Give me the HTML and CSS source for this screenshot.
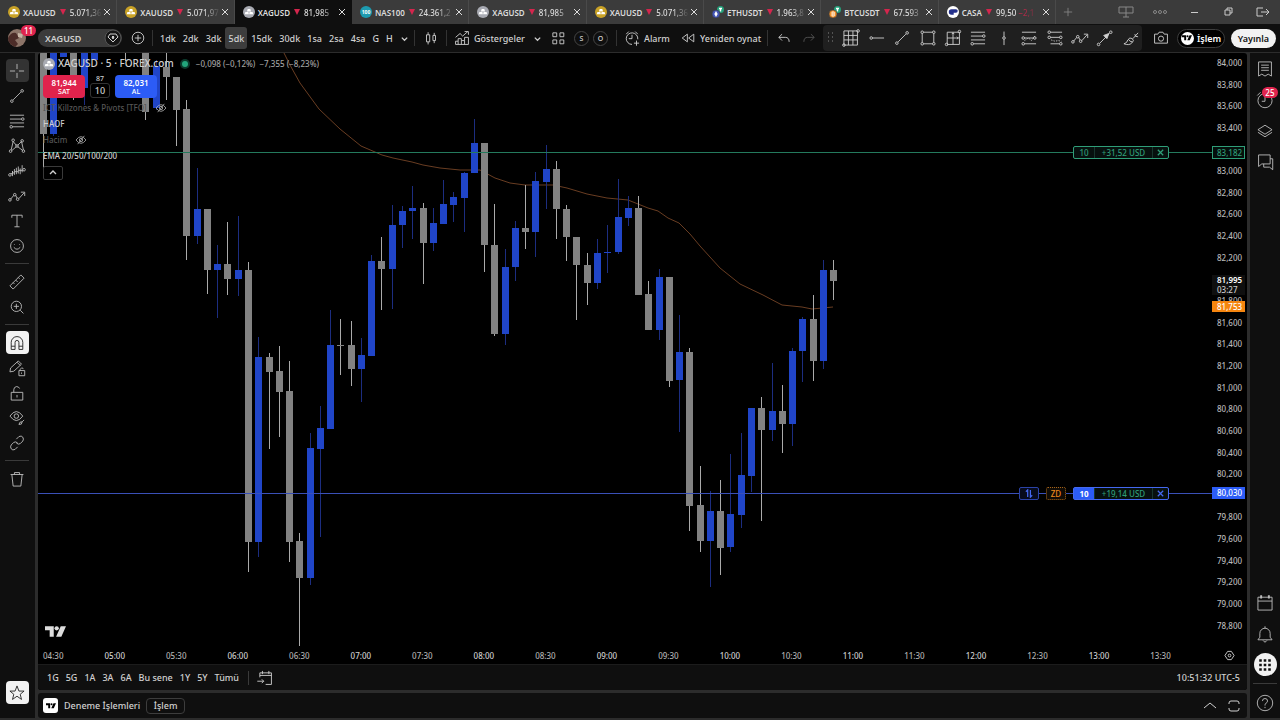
FILE: index.html
```html
<!DOCTYPE html>
<html lang="tr">
<head>
  <meta charset="UTF-8">
  <title>XAGUSD 81,985</title>
  <link rel="stylesheet" href="styles.css">
</head>
<body>

  <!-- Shared icons -->
  <svg class="sprite" xmlns="http://www.w3.org/2000/svg">
    <symbol id="i-x" viewBox="0 0 10 10"><path d="M2 2l6 6M8 2l-6 6"/></symbol>
    <symbol id="i-chev" viewBox="0 0 10 10"><path d="M2 4l3 3 3-3"/></symbol>
    <symbol id="i-up" viewBox="0 0 16 16"><path d="M2 10l6-5 6 5"/></symbol>
    <symbol id="i-gold" viewBox="0 0 12 12"><circle cx="6" cy="6" r="6" fill="#c9a227" stroke="none"/><path d="M4.7 3h2.6l.8 2.5H3.9zM2.4 6h3l.5 2.3H1.7zM6.6 6h3l.7 2.3H6.1z" fill="#fff" stroke="none"/></symbol>
    <symbol id="i-silver" viewBox="0 0 12 12"><circle cx="6" cy="6" r="6" fill="#a9abb3" stroke="none"/><path d="M4.7 3h2.6l.8 2.5H3.9zM2.4 6h3l.5 2.3H1.7zM6.6 6h3l.7 2.3H6.1z" fill="#fff" stroke="none"/></symbol>
    <symbol id="i-tv" viewBox="0 0 36 20"><path d="M0 0h15v18H8V7H0zM27 0h9l-8 18h-9z" fill="currentColor" stroke="none"/><circle cx="20" cy="3.7" r="3.7" fill="currentColor" stroke="none"/></symbol>
    <symbol id="i-trend" viewBox="0 0 28 28"><path d="M8 20L20 8"/><circle cx="6" cy="22" r="2"/><circle cx="22" cy="6" r="2"/></symbol>
    <symbol id="i-fib" viewBox="0 0 28 28"><path d="M3 5h22M3 11h18M3 17h22M7 23h18"/><circle cx="23" cy="11" r="2"/><circle cx="5" cy="23" r="2"/></symbol>
    <symbol id="i-arrowpath" viewBox="0 0 28 28"><path d="M4 19l5-6M12 13l2 4M17 18l8-9M20 8h6v6"/><circle cx="3" cy="20" r="2"/><circle cx="10.500" cy="12" r="2"/><circle cx="15" cy="19" r="2"/></symbol>
    <symbol id="i-eyeoff" viewBox="0 0 14 12"><path d="M1 6q6-8 12 0q-6 8-12 0zM3 11L11 1"/><circle cx="7" cy="6" r="2"/></symbol>
  </svg>

  <header class="tabs">
    <nav class="tab-list">
      <a class="tab" href="#"><svg class="coin"><use href="#i-gold"/></svg><b>XAUUSD</b><i></i><span>5.071,36</span><svg class="close"><use href="#i-x"/></svg></a>
      <a class="tab" href="#"><svg class="coin"><use href="#i-gold"/></svg><b>XAUUSD</b><i></i><span>5.071,97</span><svg class="close"><use href="#i-x"/></svg></a>
      <a class="tab active" href="#"><svg class="coin"><use href="#i-silver"/></svg><b>XAGUSD</b><i></i><span>81,985</span><svg class="close"><use href="#i-x"/></svg></a>
      <a class="tab" href="#"><span class="coin nas">100</span><b>NAS100</b><i></i><span>24.361,2</span><svg class="close"><use href="#i-x"/></svg></a>
      <a class="tab" href="#"><svg class="coin"><use href="#i-silver"/></svg><b>XAGUSD</b><i></i><span>81,985</span><svg class="close"><use href="#i-x"/></svg></a>
      <a class="tab" href="#"><svg class="coin"><use href="#i-gold"/></svg><b>XAUUSD</b><i></i><span>5.071,36</span><svg class="close"><use href="#i-x"/></svg></a>
      <a class="tab" href="#"><svg class="coin" viewBox="0 0 12 12"><circle cx="8.500" cy="3.500" r="3.500" fill="#26a17b" stroke="none"/><path d="M7 2.500h3M8.500 2.500v3" stroke="#fff"/><circle cx="4" cy="8" r="4" fill="#4355b5" stroke="#3b3b3b" stroke-width=".6"/><path d="M4 5l1.700 3L4 11 2.300 8z" fill="#fff" stroke="none"/></svg><b>ETHUSDT</b><i></i><span>1.963,8</span><svg class="close"><use href="#i-x"/></svg></a>
      <a class="tab" href="#"><svg class="coin" viewBox="0 0 12 12"><circle cx="8.500" cy="3.500" r="3.500" fill="#26a17b" stroke="none"/><path d="M7 2.500h3M8.500 2.500v3" stroke="#fff"/><circle cx="4" cy="8" r="4" fill="#f0902a" stroke="#3b3b3b" stroke-width=".6"/><path d="M3 6h2q1 1 0 2 1 1 0 2H3zM3 8h2" stroke="#fff" stroke-width=".8"/></svg><b>BTCUSDT</b><i></i><span>67.593</span><svg class="close"><use href="#i-x"/></svg></a>
      <a class="tab" href="#"><svg class="coin" viewBox="0 0 12 12"><circle cx="6" cy="6" r="6" fill="#fff" stroke="none"/><path d="M6 4H4.500a2 2 0 0 0 0 4H6V6h3a1 1 0 0 0 0-2z" fill="#25318c" stroke="#25318c"/></svg><b>CASA</b><i></i><span>99,50 <em>−2,1</em></span><svg class="close"><use href="#i-x"/></svg></a>
    </nav>
    <button class="new-tab" aria-label="Yeni sekme"><svg viewBox="0 0 12 12"><path d="M6 1v10M1 6h10"/></svg></button>
    <div class="window-buttons">
      <button aria-label="Düzen"><svg viewBox="0 0 18 14"><path d="M2 2h14v6H2zM9 2v10M6 12h6"/></svg></button>
      <button aria-label="Menü"><svg viewBox="0 0 18 14"><circle cx="4" cy="7" r="1.500"/><circle cx="9" cy="7" r="1.500"/><circle cx="14" cy="7" r="1.500"/></svg></button>
      <button aria-label="Küçült"><svg class="bright" viewBox="0 0 18 14"><path d="M6 7.500h7"/></svg></button>
      <button aria-label="Geri yükle"><svg class="bright" viewBox="0 0 18 14"><path d="M6 5h5v5H6zM8 5V3h5v5h-2"/></svg></button>
      <button aria-label="Çıkış"><svg class="bright" viewBox="0 0 18 14"><path d="M10 3H4v8h6M8 7h8M13 4l3 3-3 3"/></svg></button>
    </div>
  </header>

  <div class="toolbar">
    <div class="account">
      <svg viewBox="0 0 18 18"><circle cx="9" cy="9" r="9" fill="#8c7468"/><path d="M0 9q3-6 8-5l3 5-4 2 3 4-3 3Q0 15 0 9z" fill="#4c2c28"/><path d="M10 4l5 1-1 4-4-1z" fill="#c6b5a5"/></svg>
      <span class="count">11</span>
    </div>
    <button class="symbol">XAGUSD <svg viewBox="0 0 18 18"><circle cx="9" cy="9" r="8" fill="#151515" stroke="#555"/><path d="M6 5h6l2 3-5 5-5-5z"/><path d="M9 7l1 1-1 2-1-2z" fill="#fff"/></svg></button>
    <button class="slot" aria-label="Karşılaştır"><svg viewBox="0 0 28 28"><circle cx="14" cy="14" r="9"/><path d="M14 9v10M9 14h10"/></svg></button>
    <div class="intervals">
      <button>1dk</button><button>2dk</button><button>3dk</button><button class="on">5dk</button><button>15dk</button><button>30dk</button><button>1sa</button><button>2sa</button><button>4sa</button><button>G</button><button>H</button>
      <svg class="small"><use href="#i-chev"/></svg>
    </div>
    <button class="slot wide" aria-label="Mum"><svg viewBox="0 0 28 28"><path d="M7 9h5v11H7zM9.500 5v4M9.500 20v4M17 10h4v8h-4zM19 6v4M19 18v4"/></svg></button>
    <button class="labelled indicators"><svg viewBox="0 0 28 28"><path d="M4 24v-5h4v-4h5v3h5v-5h6v11zM8 19v5M13 18v6M18 18v6M4 13l7-6 4 4 8-7M18 4h6v5"/></svg>Göstergeler <svg class="small"><use href="#i-chev"/></svg></button>
    <button class="slot" aria-label="Şablonlar"><svg viewBox="0 0 28 28"><path d="M6 6h6v6H6zM17 6h6v6h-6zM6 17h6v6H6zM17 17h6v6h-6z"/></svg></button>
    <button class="letter">S</button>
    <button class="letter">O</button>
    <button class="labelled alarm"><svg viewBox="0 0 28 28"><path d="M23 16a9 9 0 1 0-9 8M14 9v6h-5M5 8l4-4M19 4l4 4M21 18v8M17 22h8"/></svg>Alarm</button>
    <button class="labelled replay"><svg viewBox="0 0 28 28"><path d="M13 8v12l-8-6zM23 8v12l-8-6z"/></svg>Yeniden oynat</button>
    <button class="slot" aria-label="Geri al"><svg viewBox="0 0 28 28"><path d="M11 8l-5 5 5 5M6 13h10q6 0 6 7"/></svg></button>
    <button class="slot dim" aria-label="Yinele"><svg viewBox="0 0 28 28"><path d="M17 8l5 5-5 5M22 13H12q-6 0-6 7"/></svg></button>
    <div class="favorites">
      <svg class="grip" viewBox="0 0 8 14"><path d="M1 2h1M5 2h1M1 6h1M5 6h1M1 10h1M5 10h1"/></svg>
      <svg viewBox="0 0 28 28"><path d="M3 3h21v22H3zM3 10h21M3 17h21M10 3v22M17 3v22"/><circle cx="25" cy="3" r="2"/><circle cx="3" cy="25" r="2"/></svg>
      <svg viewBox="0 0 28 28"><path d="M7 14h18"/><circle cx="5" cy="14" r="2"/></svg>
      <svg><use href="#i-trend"/></svg>
      <svg viewBox="0 0 28 28"><path d="M7 5h14M7 23h14M5 7v14M23 7v14"/><circle cx="5" cy="5" r="2"/><circle cx="23" cy="5" r="2"/><circle cx="5" cy="23" r="2"/><circle cx="23" cy="23" r="2"/></svg>
      <svg viewBox="0 0 28 28"><path d="M5 5h19v19H5zM14 5v19M5 14h19M12 8l2-2 2 2M20 12l2 2-2 2"/><circle cx="24" cy="4" r="2"/><circle cx="4" cy="24" r="2"/></svg>
      <svg><use href="#i-fib"/></svg>
      <svg viewBox="0 0 28 28"><path d="M14 4v8M14 16v9"/><circle cx="14" cy="14" r="2"/></svg>
      <svg viewBox="0 0 28 28"><path d="M3 5h22M7 14h14M7 23h18"/><path d="M7 18l6-4 5 4 5-7" stroke-dasharray="2 2"/><circle cx="5" cy="14" r="2"/><circle cx="23" cy="14" r="2"/><circle cx="5" cy="23" r="2"/></svg>
      <svg viewBox="0 0 28 28"><path d="M7 5h18M7 13h14M7 23h14"/><path d="M8 17l6 2 5-1 5 1" stroke-dasharray="2 2"/><circle cx="5" cy="5" r="2"/><circle cx="5" cy="13" r="2"/><circle cx="23" cy="13" r="2"/><circle cx="23" cy="23" r="2"/></svg>
      <svg><use href="#i-arrowpath"/></svg>
      <svg viewBox="0 0 28 28"><path d="M6 22L21 7"/><path d="M12 10l8-3-3 8z" fill="currentColor"/><circle cx="4" cy="24" r="2"/><circle cx="23" cy="5" r="2"/></svg>
      <svg viewBox="0 0 28 28"><path d="M3 23q5-1 6-6 3-5 7-2t-1 7q-4 4-12 1zM17 15l8-9M10 16q2 4 6 4M20 8q0 5 5 4"/></svg>
    </div>
    <button class="slot shot" aria-label="Fotoğraf"><svg viewBox="0 0 28 28"><path d="M4 8h5l2-3h6l2 3h5v14H4z"/><circle cx="14" cy="15" r="4"/></svg></button>
    <button class="trade"><span class="tv-dot"><svg><use href="#i-tv"/></svg></span>İşlem</button>
    <button class="publish">Yayınla</button>
  </div>

  <main>
    <aside class="rail left">
      <button class="on" aria-label="İmleç"><svg viewBox="0 0 28 28"><path d="M14 3v8M14 17v8M3 14h8M17 14h8"/></svg></button>
      <button aria-label="Trend çizgisi"><svg><use href="#i-trend"/></svg></button>
      <button aria-label="Fibonacci"><svg><use href="#i-fib"/></svg></button>
      <button aria-label="Formasyonlar"><svg viewBox="0 0 28 28"><path d="M5 20L8 7l5 6M15 13l6-6 3 13M6 21l7-6M15 15l8 6"/><circle cx="8" cy="5" r="2"/><circle cx="22" cy="6" r="2"/><circle cx="14" cy="14" r="2"/><circle cx="4" cy="22" r="2"/><circle cx="24" cy="22" r="2"/></svg></button>
      <button aria-label="Tahmin"><svg viewBox="0 0 28 28"><path d="M4 18h3v-4M7 14v8M10 11v9M13 9v10M16 7v11M19 10v9M22 5v11M7 17h3M10 15h6M16 13h7"/><circle cx="3" cy="20" r="2"/><circle cx="25" cy="12" r="2"/></svg></button>
      <button aria-label="Desenler"><svg><use href="#i-arrowpath"/></svg></button>
      <button aria-label="Metin"><svg viewBox="0 0 28 28"><path d="M6 9V5h16v4M14 5v18M10 23h8"/></svg></button>
      <button aria-label="Simgeler"><svg viewBox="0 0 28 28"><circle cx="14" cy="14" r="10"/><path d="M10 11v1M18 11v1M9 16q5 6 10 0"/></svg></button>
      <hr>
      <button aria-label="Ölç"><svg viewBox="0 0 28 28"><path d="M3 20L20 3l5 5L8 25zM8 15l2 2M12 11l3 3M16 7l2 2"/></svg></button>
      <button aria-label="Yakınlaştır"><svg viewBox="0 0 28 28"><circle cx="13" cy="13" r="8"/><path d="M13 9v8M9 13h8M19 19l5 5"/></svg></button>
      <hr>
      <button class="lit" aria-label="Mıknatıs"><svg viewBox="0 0 28 28"><path d="M5 24V13a9 9 0 0 1 18 0v11h-6V13a3 3 0 0 0-6 0v11zM5 19h6M17 19h6"/></svg></button>
      <button aria-label="Çizim modu"><svg viewBox="0 0 28 28"><path d="M3 20l1-6L16 3l5 5L9 19zM14 5l5 5M17 18h9v8h-9zM19 18v-2q2-4 5-1M21 21v2"/></svg></button>
      <button aria-label="Kilitle"><svg viewBox="0 0 28 28"><path d="M5 13h18v12H5zM9 13V9q0-4 4-5 4 0 5 3M14 17v4"/></svg></button>
      <button aria-label="Gizle"><svg viewBox="0 0 28 28"><path d="M3 11q10-14 20 0-10 14-20 0zM17 24q1-5 5-4l3-3M17 24q5 1 5-4"/><circle cx="13" cy="11" r="3.500"/></svg></button>
      <button aria-label="Bağla"><svg viewBox="0 0 28 28"><path d="M13 8l4-4q4-2 6 1t0 6l-4 4q-3 2-6-1M15 20l-4 4q-4 2-6-1t0-6l4-4q3-2 6 1"/></svg></button>
      <hr>
      <button aria-label="Sil"><svg viewBox="0 0 28 28"><path d="M4 7h20M10 7V4h8v3M6 7l2 18h12l2-18"/></svg></button>
      <button class="lit last" aria-label="Favoriler"><svg viewBox="0 0 28 28"><path d="M14 3l3 8h8l-6 5 2 8-7-5-7 5 2-8-6-5h8z"/></svg></button>
    </aside>

    <div class="center">
      <section class="panel chart-panel">
        <div class="chart-row">
          <div class="plot">
            <svg id="chart" viewBox="38 53 1174 594" preserveAspectRatio="none"></svg>
            <div class="legend">
              <h1><svg><use href="#i-silver"/></svg>XAGUSD · 5 · FOREX.com<i class="live"></i><span>−0,098 (−0,12%)&nbsp; −7,355 (−8,23%)</span></h1>
              <div class="quotes">
                <button class="sell"><b>81,944</b>SAT</button>
                <div class="spread"><small>87</small><span>10</span></div>
                <button class="buy"><b>82,031</b>AL</button>
              </div>
              <p class="off">ICT Killzones &amp; Pivots [TFO] <svg><use href="#i-eyeoff"/></svg></p>
              <p>HAOF</p>
              <p class="off">Hacim <svg><use href="#i-eyeoff"/></svg></p>
              <p>EMA 20/50/100/200</p>
              <button class="collapse" aria-label="Daralt"><svg viewBox="0 0 10 10"><path d="M2 6l3-3 3 3"/></svg></button>
            </div>
            <svg class="watermark"><use href="#i-tv"/></svg>
            <div class="order take">
              <div class="tag"><span>10</span><span class="pnl">+31,52 USD</span><button aria-label="Kapat"><svg><use href="#i-x"/></svg></button></div>
            </div>
            <div class="order position">
              <button class="chip" aria-label="Ters çevir"><svg viewBox="0 0 10 10"><path d="M3 9V1L1 3M6 1v8l2-2"/></svg></button>
              <button class="chip stop">ZD</button>
              <div class="tag"><span class="qty">10</span><span class="pnl">+19,14 USD</span><button aria-label="Kapat"><svg><use href="#i-x"/></svg></button></div>
            </div>
          </div>
          <div class="prices">
            <span>84,000</span><span>83,800</span><span>83,600</span><span>83,400</span><span></span><span>83,000</span><span>82,800</span><span>82,600</span><span>82,400</span><span>82,200</span><span></span><span>81,800</span><span>81,600</span><span>81,400</span><span>81,200</span><span>81,000</span><span>80,800</span><span>80,600</span><span>80,400</span><span>80,200</span><span></span><span>79,800</span><span>79,600</span><span>79,400</span><span>79,200</span><span>79,000</span><span>78,800</span>
            <div class="mark green">83,182</div>
            <div class="mark last"><b>81,995</b>03:27</div>
            <div class="mark orange">81,753</div>
            <div class="mark blue">80,030</div>
          </div>
        </div>
        <div class="times">
          <div class="hours"><span>04:30</span><b>05:00</b><span>05:30</span><b>06:00</b><span>06:30</span><b>07:00</b><span>07:30</span><b>08:00</b><span>08:30</span><b>09:00</b><span>09:30</span><b>10:00</b><span>10:30</span><b>11:00</b><span>11:30</span><b>12:00</b><span>12:30</span><b>13:00</b><span>13:30</span></div>
          <button aria-label="Ayarlar"><svg viewBox="0 0 12 12"><path d="M4 1.500h4L11 6 8 10.500H4L1 6z"/><circle cx="6" cy="6" r="1.500"/></svg></button>
        </div>
        <div class="ranges">
          <button>1G</button><button>5G</button><button>1A</button><button>3A</button><button>6A</button><button>Bu sene</button><button>1Y</button><button>5Y</button><button>Tümü</button>
          <button class="goto" aria-label="Tarihe git"><svg viewBox="0 0 28 28"><path d="M6 13V6h18v18h-9M6 10h18M10 3v5M20 3v5M2 19h10M9 16l3 3-3 3"/></svg></button>
          <span class="clock">10:51:32 UTC-5</span>
        </div>
      </section>

      <footer class="panel account-bar">
        <span class="tv-box"><svg><use href="#i-tv"/></svg></span>
        <span>Deneme İşlemleri</span>
        <button class="outline">İşlem</button>
        <span class="panel-buttons">
          <button aria-label="Aç"><svg><use href="#i-up"/></svg></button>
          <button aria-label="Tam ekran"><svg viewBox="0 0 16 16"><path d="M3 6V5q0-2 2-2h6q2 0 2 2v1M3 10v1q0 2 2 2h6q2 0 2-2v-1"/></svg></button>
        </span>
      </footer>
    </div>

    <aside class="rail right">
      <button aria-label="İzleme listesi"><svg viewBox="0 0 28 28"><path d="M4 3h20v22l-5-3-5 3-5-3-5 3zM8 8h12M8 12h12M8 16h12"/></svg></button>
      <button class="alerts" aria-label="Alarmlar"><svg viewBox="0 0 28 28"><circle cx="14" cy="15" r="11"/><path d="M14 9v7H9M2 7l5-5"/></svg><span class="count">25</span></button>
      <button aria-label="Nesneler"><svg viewBox="0 0 28 28"><path d="M14 5l11 7-11 7-11-7zM3 16l11 7 11-7"/></svg></button>
      <button aria-label="Sohbet"><svg viewBox="0 0 28 28"><path d="M4 3h18v14H9l-5 4zM22 9h4v17l-5-4h-9v-5"/></svg></button>
      <button class="first-bottom" aria-label="Takvim"><svg viewBox="0 0 28 28"><path d="M3 5h22v20H3zM3 11h22"/><path d="M8 2v5M20 2v5" stroke-width="3"/></svg></button>
      <button aria-label="Bildirimler"><svg viewBox="0 0 28 28"><path d="M3 23h22l-3-4v-6a8 8 0 0 0-16 0v6zM11 24q3 5 6 0M14 2v3"/></svg></button>
      <button class="apps" aria-label="Ürünler"><svg viewBox="0 0 28 28"><path d="M5 7h4M12 7h4M19 7h4M5 14h4M12 14h4M19 14h4M5 21h4M12 21h4M19 21h4" stroke-width="4"/></svg></button>
      <hr>
      <button aria-label="Yardım"><svg viewBox="0 0 28 28"><circle cx="14" cy="14" r="12"/><path d="M10 11q0-4 4-4t4 4q0 2-4 5v2M14 20v2"/></svg></button>
    </aside>
  </main>

  <script src="chart.js"></script>
</body>
</html>
```

FILE: styles.css
```css
* {
  box-sizing: border-box;
}

body {
  margin: 0;
  height: 100vh;
  display: flex;
  flex-direction: column;
  overflow: hidden;
  background-color: #2c2c2c;
  color: #d0d0d0;
  font-family: "Noto Sans", "Open Sans", sans-serif;
  font-size: 9px;
  font-weight: 500;
}

button {
  display: flex;
  align-items: center;
  justify-content: center;
  padding: 0;
  border: 0;
  background: none;
  color: inherit;
  font: inherit;
  cursor: pointer;
}

svg {
  flex: none;
  fill: none;
  stroke: currentColor;
  stroke-width: 1.4;
}

.sprite {
  position: absolute;
  width: 0;
  height: 0;
}

.count {
  position: absolute;
  padding: 0 3px;
  border-radius: 6px;
  background-color: #e0244e;
  color: #fff;
  font-size: 8px;
  line-height: 11px;
}

/* Tabs */
.tabs {
  display: flex;
  align-items: stretch;
  height: 24px;
  background-color: #3b3b3b;
}

.tab-list {
  display: flex;
  width: 1056px;
}

.tab {
  flex: 1;
  display: flex;
  align-items: center;
  min-width: 0;
  padding: 0 4px 0 8px;
  border-right: 1px solid #4a4a4a;
  color: #dcdcdc;
  font-size: 8px;
  text-decoration: none;
  white-space: nowrap;
}

.tab.active {
  background-color: #0f0f0f;
  border-color: #0f0f0f;
}

.tab b {
  margin-left: 3px;
  font-weight: 600;
}

.tab i {
  margin: 0 4px;
  border: 3px solid transparent;
  border-top: 6px solid #d4264d;
  border-bottom: 0;
}

.tab span:not(.coin) {
  flex: 1;
  -webkit-mask-image: linear-gradient(to right, #000 50%, transparent);
  mask-image: linear-gradient(to right, #000 50%, transparent);
}

.tab em {
  color: #d4264d;
  font-style: normal;
}

.coin {
  flex: none;
  width: 12px;
  height: 12px;
}

.nas {
  border-radius: 50%;
  background-color: #1d9bb0;
  color: #fff;
  font-size: 5px;
  font-weight: bold;
  line-height: 12px;
  text-align: center;
}

.close {
  width: 10px;
  height: 10px;
  stroke-width: 1;
}

.new-tab {
  width: 24px;
  color: #888;
}

.new-tab svg {
  width: 10px;
  height: 10px;
  stroke-width: 1;
}

.window-buttons {
  display: flex;
  gap: 16px;
  margin-left: auto;
  padding-right: 9px;
  color: #888;
}

.window-buttons svg {
  width: 18px;
  height: 14px;
  stroke-width: 1;
}

.window-buttons .bright {
  color: #ccc;
}

/* Toolbar */
.toolbar {
  display: flex;
  align-items: center;
  height: 28px;
  margin-bottom: 1px;
  padding: 0 4px 0 8px;
  background-color: #0f0f0f;
  white-space: nowrap;
}

.toolbar svg {
  width: 18px;
  height: 18px;
}

.toolbar .small {
  width: 9px;
  height: 9px;
}

.account {
  position: relative;
  width: 30px;
  height: 18px;
}

.account svg {
  stroke: none;
}

.account .count {
  top: -4px;
  left: 13px;
}

.symbol {
  justify-content: space-between;
  width: 84px;
  height: 18px;
  padding-left: 7px;
  border-radius: 9px;
  background-color: #3b3b3b;
  font-weight: 600;
}

.symbol svg {
  stroke-width: 1;
}

.slot {
  width: 25px;
  margin-left: 3px;
}

.slot.dim {
  margin-left: 0;
  color: #555;
}

.slot.shot {
  margin-left: 6px;
}

.intervals {
  display: flex;
  justify-content: space-between;
  align-items: center;
  width: 263px;
  height: 16px;
  margin-left: 2px;
  padding: 0 5px 0 4px;
  border: solid #333;
  border-width: 0 1px;
}

.intervals button {
  height: 22px;
  padding: 0 3px;
  border-radius: 3px;
}

.intervals .on {
  background-color: #3d3d3d;
}

.intervals .small {
  margin-left: 3px;
}

.slot.wide {
  width: 32px;
  height: 16px;
  margin: 0;
  border-right: 1px solid #333;
}

.labelled {
  justify-content: flex-start;
  gap: 3px;
  height: 16px;
}

.indicators {
  width: 95px;
  padding-left: 6px;
}

.indicators .small {
  margin-left: auto;
}

.letter {
  width: 15px;
  height: 15px;
  margin-left: 4px;
  border: 1px solid #444;
  border-radius: 50%;
  font-size: 7px;
}

.alarm {
  width: 63px;
  margin-left: 8px;
  padding-left: 6px;
  border-left: 1px solid #333;
}

.replay {
  width: 89px;
  border-right: 1px solid #333;
}

.favorites {
  flex: 1;
  display: flex;
  justify-content: space-between;
  align-items: center;
  height: 26px;
  margin-left: 2px;
  padding: 0 2px 0 4px;
  border-radius: 4px;
  background-color: #1f1f1f;
}

.favorites .grip {
  width: 8px;
  height: 14px;
  color: #666;
}

.trade,
.publish {
  height: 19px;
  border-radius: 10px;
  font-weight: 600;
}

.trade {
  gap: 3px;
  width: 48px;
  margin: 0 6px 0 4px;
  border: 1px solid #3d3d3d;
  background-color: #000;
  color: #fff;
}

.tv-dot,
.tv-box {
  display: flex;
  align-items: center;
  justify-content: center;
  width: 13px;
  height: 13px;
  border-radius: 50%;
  background-color: #fff;
  color: #000;
}

.toolbar .tv-dot svg,
.tv-box svg {
  width: 10px;
  height: 6px;
}

.publish {
  width: 45px;
  background-color: #f2f2f2;
  color: #111;
}

/* Page columns */
main {
  flex: 1;
  display: flex;
  gap: 3px;
  min-height: 0;
  padding-bottom: 2px;
}

.rail {
  display: flex;
  flex-direction: column;
  align-items: center;
  background-color: #0f0f0f;
  color: #bdbdbd;
}

.rail button {
  width: 23px;
  height: 23px;
  border-radius: 4px;
}

.rail svg {
  width: 18px;
  height: 18px;
}

.rail hr {
  width: 24px;
  margin: 4px 0;
  border: 0;
  border-top: 1px solid #3a3a3a;
}

.left {
  gap: 2px;
  width: 35px;
  padding: 6px 1px 14px 0;
}

.left .on {
  background-color: #333;
}

.left .lit {
  background-color: #f2f2f2;
  color: #222;
}

.left .last {
  margin-top: auto;
}

.right {
  gap: 8px;
  width: 30px;
  padding: 4px 0;
}

.right hr {
  margin: -1px 0;
}

.right .alerts {
  position: relative;
}

.right .alerts .count {
  top: -1px;
  right: -1px;
}

.right .first-bottom {
  margin-top: auto;
}

.right .apps {
  border-radius: 50%;
  background-color: #f2f2f2;
  color: #111;
}

.center {
  flex: 1;
  display: flex;
  flex-direction: column;
  gap: 3px;
  min-width: 0;
}

.panel {
  border-radius: 3px;
  overflow: hidden;
}

.chart-panel {
  flex: 1;
  display: flex;
  flex-direction: column;
  min-height: 0;
  background-color: #000;
}

.chart-row {
  flex: 1;
  display: flex;
  min-height: 0;
}

.plot {
  position: relative;
  flex: 1;
  min-width: 0;
}

#chart {
  display: block;
  width: 100%;
  height: 100%;
}

/* Legend */
.legend {
  position: absolute;
  top: 3px;
  left: 5px;
  font-size: 8px;
}

.legend h1 {
  display: flex;
  align-items: center;
  margin: 0 0 4px;
  font-size: 10px;
  font-weight: 500;
  line-height: 15px;
}

.legend h1 svg {
  width: 12px;
  height: 12px;
  margin-right: 3px;
}

.legend h1 span {
  color: #a0a0a0;
  font-size: 8px;
}

.live {
  width: 6px;
  height: 6px;
  margin: 0 8px;
  border-radius: 50%;
  background-color: #22a67c;
  box-shadow: 0 0 0 2px #0b3a2c;
}

.quotes {
  display: flex;
  gap: 5px;
  margin-bottom: 2px;
}

.sell,
.buy {
  flex-direction: column;
  width: 42px;
  height: 23px;
  border-radius: 4px;
  background-color: #e0234c;
  color: #fff;
  font-size: 7px;
  line-height: 9px;
}

.buy {
  background-color: #2c5cf6;
}

.quotes b {
  font-size: 8px;
  font-weight: 600;
}

.spread {
  width: 20px;
  text-align: center;
}

.spread small {
  display: block;
  font-size: 7px;
  line-height: 8px;
}

.spread span {
  display: block;
  border: 1px solid #333;
  border-radius: 3px;
  background-color: #000;
  font-size: 9px;
  line-height: 13px;
}

.legend p {
  display: flex;
  align-items: center;
  gap: 8px;
  margin: 0;
  line-height: 16px;
}

.legend .off {
  color: #555;
}

.legend .off svg {
  width: 12px;
  height: 10px;
  color: #aaa;
  stroke-width: 1;
}

.collapse {
  width: 20px;
  height: 14px;
  margin-top: 2px;
  border: 1px solid #3a3a3a;
  border-radius: 2px;
}

.collapse svg {
  width: 10px;
  height: 10px;
}

.watermark {
  position: absolute;
  bottom: 9px;
  left: 7px;
  width: 21px;
  height: 12px;
  color: #ddd;
}

/* Orders on the chart */
.order {
  position: absolute;
  right: 43px;
  display: flex;
  gap: 7px;
  color: #2f9e78;
  font-size: 8px;
  line-height: 11px;
}

.take {
  top: 93px;
}

.position {
  top: 434px;
  color: #4468f0;
}

.tag {
  display: flex;
  width: 96px;
  border: 1px solid;
  border-radius: 2px;
  background-color: #07100e;
  text-align: center;
}

.tag span:first-child {
  width: 20px;
}

.tag .qty {
  background-color: #2c5cf6;
  color: #fff;
  font-weight: bold;
}

.tag .pnl {
  flex: 1;
  border: solid #17362d;
  border-width: 0 1px;
  color: #2f9e78;
}

.tag button {
  width: 15px;
}

.tag svg,
.chip svg {
  width: 9px;
  height: 9px;
}

.chip {
  width: 20px;
  height: 13px;
  border: 1px solid #2b43a8;
  border-radius: 2px;
  background-color: #070b1c;
}

.chip.stop {
  border: 1px dotted #a86418;
  background-color: #0f0b06;
  color: #ee8a1d;
}

/* Axes */
.prices {
  position: relative;
  display: flex;
  flex-direction: column;
  justify-content: space-between;
  width: 35px;
  padding: 4px 0 15px 5px;
  color: #b8b8b8;
  font-size: 8px;
  line-height: 12px;
}

.prices span {
  height: 12px;
}

.mark {
  position: absolute;
  left: 0;
  width: 33px;
  padding-left: 5px;
  color: #fff;
}

.mark.green {
  top: 93px;
  padding-left: 4px;
  border: 1px solid #2f9e78;
  background-color: #050f0c;
  color: #2f9e78;
  line-height: 11px;
}

.mark.last {
  top: 222px;
  background-color: #0f0f0f;
  color: #ccc;
  line-height: 10px;
}

.mark.last b {
  display: block;
  color: #fff;
  font-weight: 600;
}

.mark.orange {
  top: 248px;
  background-color: #f5850f;
  line-height: 11px;
}

.mark.blue {
  top: 434px;
  background-color: #2c5cf6;
}

.times {
  display: flex;
  align-items: center;
  height: 17px;
  font-size: 8px;
}

.hours {
  flex: 1;
  display: flex;
  justify-content: space-between;
  padding: 0 41px 0 5px;
  color: #b0b0b0;
}

.hours b {
  color: #cfcfcf;
  font-weight: 500;
}

.times button {
  width: 35px;
}

.times svg {
  width: 11px;
  height: 11px;
  stroke-width: 1;
}

.ranges {
  display: flex;
  align-items: center;
  gap: 7px;
  height: 26px;
  padding: 0 7px 0 9px;
  border-top: 1px solid #1c1c1c;
  background-color: #0f0f0f;
}

.goto {
  height: 14px;
  margin-left: 2px;
  padding-left: 7px;
  border-left: 1px solid #3a3a3a;
}

.goto svg {
  width: 18px;
  height: 18px;
}

.clock {
  margin-left: auto;
}

.account-bar {
  display: flex;
  align-items: center;
  gap: 6px;
  height: 25px;
  padding: 0 5px;
  background-color: #0f0f0f;
}

.tv-box {
  width: 15px;
  height: 15px;
  border-radius: 3px;
}

.outline {
  width: 39px;
  height: 16px;
  border: 1px solid #3d3d3d;
  border-radius: 4px;
}

.panel-buttons {
  display: flex;
  gap: 8px;
  margin-left: auto;
}

.panel-buttons svg {
  width: 16px;
  height: 16px;
  stroke-width: 1;
}

/* Chart shapes */
.candle-up {
  fill: #2045c8;
  stroke: none;
}

.candle-down {
  fill: #828282;
  stroke: none;
}

.wick-up {
  fill: #1c2d80;
  stroke: none;
}

.wick-down {
  fill: #aaa;
  stroke: none;
}

.ema {
  stroke: #693d22;
  stroke-width: 1;
}

.line-take {
  stroke: #247a5d;
  stroke-width: 1;
}

.line-position {
  stroke: #3a50b8;
  stroke-width: 1;
}
```

FILE: chart.js
```js
// direction, high, body top, body bottom, low
const candles = [
  ['d', 53, 53, 134, 168], ['u', 53, 53, 134, 136], ['u', 53, 53, 57, 57], ['d', 53, 53, 80, 100],
  ['u', 53, 53, 88, 105], ['u', 53, 53, 60, 60], ['u', 53, 53, 53, 53], ['d', 53, 53, 53, 53],
  ['d', 53, 53, 53, 61], ['d', 53, 53, 53, 53], ['d', 53, 53, 112, 120], ['u', 60, 66, 108, 110],
  ['d', 53, 67, 77, 100], ['d', 77, 77, 110, 146], ['d', 100, 109, 236, 260], ['u', 168, 209, 236, 244],
  ['d', 209, 209, 270, 294], ['u', 245, 264, 270, 318], ['d', 222, 264, 279, 295], ['u', 216, 270, 279, 296],
  ['d', 262, 270, 542, 572], ['u', 337, 357, 542, 557], ['d', 353, 357, 372, 449], ['d', 346, 371, 392, 437],
  ['d', 361, 391, 542, 562], ['d', 533, 541, 578, 646], ['u', 433, 448, 578, 585], ['u', 406, 428, 449, 537],
  ['u', 310, 345, 429, 429], ['d', 319, 345, 346, 375], ['d', 321, 345, 369, 386], ['u', 338, 355, 369, 402],
  ['u', 255, 261, 356, 356], ['d', 237, 261, 269, 310], ['u', 205, 225, 269, 309], ['u', 206, 211, 225, 248],
  ['u', 186, 208, 211, 239], ['d', 203, 208, 243, 284], ['u', 208, 223, 243, 251], ['u', 180, 204, 224, 224],
  ['u', 192, 197, 205, 222], ['u', 172, 173, 198, 232], ['u', 119, 143, 173, 173], ['d', 143, 143, 245, 272],
  ['d', 204, 245, 334, 336], ['u', 249, 267, 334, 345], ['u', 221, 228, 267, 281], ['d', 185, 228, 232, 249],
  ['u', 172, 181, 232, 257], ['u', 145, 169, 182, 209], ['d', 161, 169, 209, 239], ['d', 205, 209, 237, 261],
  ['d', 237, 237, 265, 320], ['d', 253, 265, 283, 305], ['u', 239, 253, 283, 289], ['u', 225, 252, 253, 273],
  ['u', 179, 217, 252, 254], ['u', 196, 208, 218, 226], ['d', 196, 208, 295, 295], ['d', 281, 294, 330, 330],
  ['u', 269, 277, 330, 340], ['d', 277, 277, 381, 387], ['u', 315, 352, 380, 432], ['d', 348, 352, 506, 531],
  ['d', 466, 505, 541, 552], ['u', 491, 511, 541, 587], ['d', 480, 511, 548, 575], ['u', 454, 514, 547, 552],
  ['u', 433, 475, 515, 528], ['u', 408, 408, 476, 492], ['d', 397, 408, 430, 521], ['u', 363, 411, 430, 441],
  ['d', 385, 411, 424, 453], ['u', 348, 351, 424, 446], ['u', 317, 319, 351, 382], ['d', 295, 319, 361, 381],
  ['u', 260, 270, 361, 369], ['d', 260, 270, 281, 300]
];

const ema = '284,53 290,65 300,83 319,109 340,129 361,146 382,155 393,158 412,162 423,165 440,168 460,170 480,170 ' +
  '495,178 510,183 525,185 553,185 567,188 587,194 607,198 628,200 648,208 658,211 668,218 679,223 690,234 ' +
  '700,246 720,268 740,284 763,295 782,305 802,307 812,309 833,307';

const chart = document.getElementById('chart');
const first = 42.7;
const step = 10.265;

let html = `<polyline class="ema" points="${ema}"/>`;

candles.forEach((c, i) => {
  const x = Math.round(first + i * step);
  const side = c[0] === 'u' ? 'up' : 'down';
  html += `<rect class="wick-${side}" x="${x}" y="${c[1]}" width="1" height="${c[4] - c[1]}"/>`;
  html += `<rect class="candle-${side}" x="${x - 3}" y="${c[2]}" width="7" height="${c[3] - c[2]}"/>`;
});

html += '<path class="line-take" d="M38 152.5H1212"/>';
html += '<path class="line-position" d="M38 493.5H1212"/>';

chart.innerHTML = html;
```
